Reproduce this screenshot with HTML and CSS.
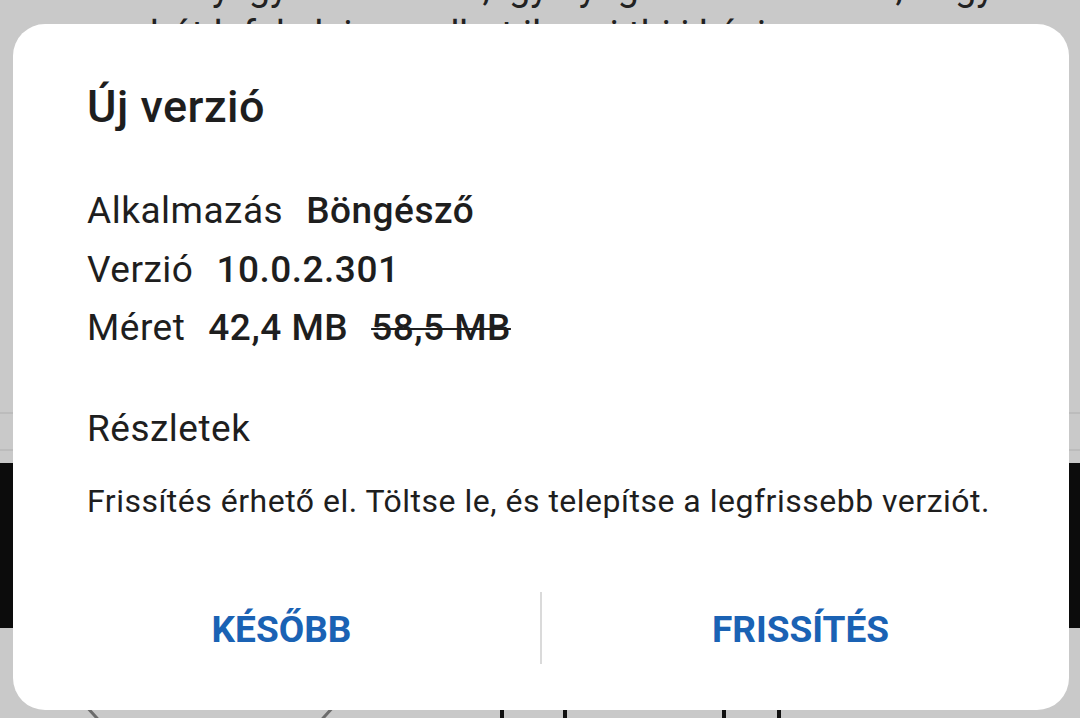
FILE: index.html
```html
<!DOCTYPE html>
<html lang="hu">
<head>
  <meta charset="UTF-8" />
  <meta name="viewport" content="width=device-width, initial-scale=1.0"/>
  <title>Új verzió</title>
  <link rel="stylesheet" href="styles.css">
</head>
<body>
  <div class="page">
    <div class="page-text">
      <p>ennyi gyorsabb lesz, így nyugodtan frissíthet, hogy</p>
      <p>hát lefel ek i mondhat ilyen i thi i kézi enge</p>
    </div>
    <div class="page-line first"></div>
    <div class="page-line"></div>
    <div class="page-band"></div>
    <div class="page-bottom">
      <svg class="chevron" width="300" height="20" viewBox="0 0 300 20">
        <path d="M40 0 L60 22 M290 0 L270 22" stroke="#6b6b6b" stroke-width="3" fill="none"/>
      </svg>
      <span class="bar b1"></span>
      <span class="bar b2"></span>
      <span class="bar b3"></span>
      <span class="bar b4"></span>
    </div>
  </div>

  <div class="dialog">
    <h1 class="dialog-title">Új verzió</h1>

    <div class="info">
      <div class="info-row"><span class="label">Alkalmazás</span><span class="value">Böngésző</span></div>
      <div class="info-row"><span class="label">Verzió</span><span class="value">10.0.2.301</span></div>
      <div class="info-row"><span class="label">Méret</span><span class="value">42,4 MB</span><span class="value old">58,5 MB</span></div>
    </div>

    <h2 class="details-title">Részletek</h2>
    <p class="details-text">Frissítés érhető el. Töltse le, és telepítse a legfrissebb verziót.</p>

    <div class="actions">
      <button class="action">KÉSŐBB</button>
      <span class="divider"></span>
      <button class="action">FRISSÍTÉS</button>
    </div>
  </div>
</body>
</html>
```

FILE: styles.css
```css
html, body {
  margin: 0;
  padding: 0;
  height: 100%;
  overflow: hidden;
}
body {
  font-family: Roboto, "Noto Sans", sans-serif;
  background: #c9c9c9;
  color: #1e1e1e;
}

/* dimmed page behind the dialog */
.page {
  height: 718px;
  display: flex;
  flex-direction: column;
}
.page-text {
  margin-top: -37px;
  height: 96px;
  flex-shrink: 0;
  padding-left: 150px;
  color: #222;
  font-size: 38px;
  line-height: 48px;
}
.page-text p {
  margin: 0;
  white-space: nowrap;
}
.page-line {
  flex-shrink: 0;
  height: 2px;
  background: #bcbcbc;
}
.page-line.first {
  margin-top: 353px;
}
.page-line + .page-line {
  margin-top: 35px;
}
.page-band {
  flex-shrink: 0;
  margin-top: 12px;
  height: 165px;
  background: #0c0c0c;
}
.page-bottom {
  flex-shrink: 0;
  margin-top: 77px;
  display: flex;
  align-items: flex-start;
  height: 20px;
}
.chevron {
  margin-left: 45px;
}
.bar {
  width: 4px;
  height: 20px;
  background: #111;
  margin-top: 4px;
}
.b1 { margin-left: 155px; }
.b2 { margin-left: 59px; }
.b3 { margin-left: 155px; }
.b4 { margin-left: 51px; }

/* dialog */
.dialog {
  position: fixed;
  left: 13px;
  top: 24px;
  width: 1056px;
  height: 686px;
  box-sizing: border-box;
  background: #fff;
  border-radius: 32px;
  padding: 57px 0 0 74px;
  display: flex;
  flex-direction: column;
}
.dialog-title {
  margin: 0;
  font-size: 45px;
  line-height: 52px;
  font-weight: 500;
  letter-spacing: 0.5px;
}
.info {
  margin-top: 49px;
}
.info-row {
  font-size: 37px;
  line-height: 58.5px;
  letter-spacing: 0.5px;
  display: flex;
  gap: 23px;
}
.value {
  font-weight: 500;
}
.value.old {
  text-decoration: line-through;
  text-decoration-thickness: 2px;
}
.details-title {
  margin: 42px 0 0;
  font-size: 37px;
  line-height: 58px;
  font-weight: 400;
  letter-spacing: 0.5px;
}
.details-text {
  margin: 21px 0 0;
  font-size: 32px;
  line-height: 44px;
  letter-spacing: 0.5px;
}
.actions {
  margin: 69px 0 0 -74px;
  padding: 0 10px;
  height: 72px;
  display: flex;
  align-items: center;
}
.action {
  flex: 1;
  background: none;
  border: none;
  font-family: inherit;
  font-size: 37px;
  font-weight: 700;
  color: #1a62b4;
  padding: 4px 0 0;
  height: 72px;
}
.divider {
  width: 2px;
  height: 72px;
  background: #dadada;
}
```
